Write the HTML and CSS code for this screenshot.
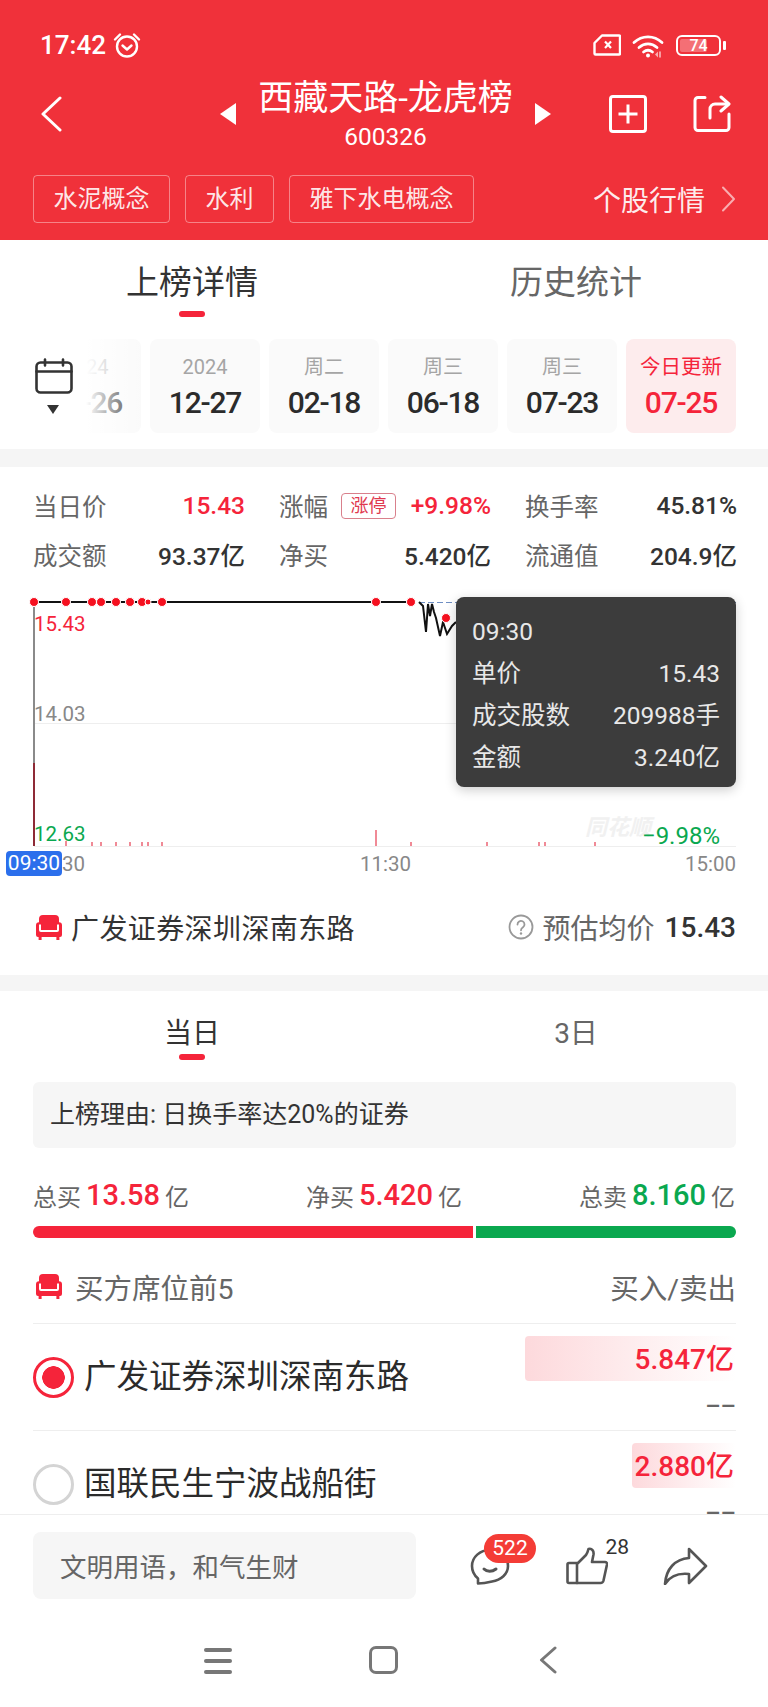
FILE: index.html
```html
<!DOCTYPE html>
<html lang="zh-CN">
<head>
    <meta charset="UTF-8">
    <meta name="viewport" content="width=device-width, initial-scale=1.0">
    <title>西藏天路-龙虎榜</title>
    <link rel="stylesheet" href="styles.css">
</head>
<body>
    <svg class="defs" width="0" height="0">
        <symbol id="sofa" viewBox="0 0 26 25">
            <path fill="#f5243a" d="M7 0h12a4 4 0 0 1 4 4v3.200a3 3 0 0 1 3 3V20a2 2 0 0 1-2 2h-.6v3h-3v-3H5.600v3h-3v-3H2a2 2 0 0 1-2-2v-9.800a3 3 0 0 1 3-3V4a4 4 0 0 1 4-4z"/>
            <path fill="none" stroke="#fff" stroke-width="2" d="M4 9.500v5.500a1 1 0 0 0 1 1h16a1 1 0 0 0 1-1V9.500"/>
        </symbol>
    </svg>

    <div class="page">
        <div class="content">
            <!-- Red header -->
            <header class="header">
                <div class="status-bar">
                    <div class="status-left">
                        <span class="clock">17:42</span>
                        <svg class="alarm" viewBox="0 0 28 26" fill="none" stroke="#fff" stroke-width="2.400" stroke-linecap="round" stroke-linejoin="round">
                            <circle cx="14" cy="14.500" r="10"/>
                            <path d="M9.500 13.500l4.500 4 4.500-4"/>
                            <path d="M2 7.500L7 2.500M26 7.500L21 2.500"/>
                        </svg>
                    </div>
                    <div class="status-right">
                        <svg class="sim" viewBox="0 0 28 22" fill="none" stroke="#fff" stroke-width="2.400" stroke-linejoin="round">
                            <path d="M9 1.500h17a1 1 0 0 1 1 1v17a1 1 0 0 1-1 1H2.500a1 1 0 0 1-1-1V9z"/>
                            <path stroke-width="2.200" d="M12 7.500l6 6.500M18 7.500l-6 6.500"/>
                        </svg>
                        <svg class="wifi" viewBox="0 0 32 25" fill="none" stroke="#fff" stroke-width="2.800" stroke-linecap="round">
                            <path d="M2 9.500c8-7.500 20-7.500 28 0"/>
                            <path d="M7 14.500c5.500-4.800 12.500-4.800 18 0"/>
                            <path d="M11.500 19c3-2.400 6-2.400 9 0"/>
                            <circle cx="16" cy="22.500" r="2" fill="#fff" stroke="none"/>
                            <path d="M23 21.500l3-3v6z" fill="#fff" fill-opacity=".6" stroke="none"/>
                            <path d="M28 19v5" stroke-width="1.500" stroke-opacity=".7"/>
                        </svg>
                        <div class="battery">
                            <div class="battery-body">
                                <span class="battery-fill"></span>
                                <span class="battery-text">74</span>
                            </div>
                            <span class="battery-cap"></span>
                        </div>
                    </div>
                </div>

                <div class="title-bar">
                    <svg class="back" viewBox="0 0 22 36" fill="none" stroke="#fff" stroke-width="3" stroke-linecap="round" stroke-linejoin="round">
                        <path d="M20 2L3 18l17 16"/>
                    </svg>
                    <div class="title-center">
                        <span class="tri tri-left"></span>
                        <div class="title-text">
                            <div class="title">西藏天路-龙虎榜</div>
                            <div class="code">600326</div>
                        </div>
                        <span class="tri tri-right"></span>
                    </div>
                    <div class="title-actions">
                        <svg class="action" viewBox="0 0 38 38" fill="none" stroke="#fff" stroke-width="3" stroke-linejoin="round">
                            <rect x="1.500" y="1.500" width="35" height="35" rx="2.500"/>
                            <path d="M19 9.500v19M9.500 19h19"/>
                        </svg>
                        <svg class="action" viewBox="0 0 38 38" fill="none" stroke="#fff" stroke-width="3" stroke-linecap="round" stroke-linejoin="round">
                            <path d="M12 2.500H5a3 3 0 0 0-3 3v27a3 3 0 0 0 3 3h28a3 3 0 0 0 3-3V19"/>
                            <path d="M17 23v-9a5 5 0 0 1 5-5h13"/>
                            <path d="M28 2l8 7-8 7"/>
                        </svg>
                    </div>
                </div>

                <div class="tag-bar">
                    <div class="tags">
                        <span class="tag">水泥概念</span>
                        <span class="tag">水利</span>
                        <span class="tag">雅下水电概念</span>
                    </div>
                    <div class="quote-link">
                        <span>个股行情</span>
                        <svg class="quote-arrow" viewBox="0 0 15 26" fill="none" stroke="#fff" stroke-opacity=".6" stroke-width="2" stroke-linecap="round" stroke-linejoin="round">
                            <path d="M2 1.500l11 11.500L2 24.500"/>
                        </svg>
                    </div>
                </div>
            </header>

            <!-- Main tabs -->
            <div class="tabs">
                <div class="tab active"><span>上榜详情</span><i class="tab-line"></i></div>
                <div class="tab"><span>历史统计</span></div>
            </div>

            <!-- Date picker row -->
            <div class="date-row">
                <div class="calendar">
                    <svg class="calendar-icon" viewBox="0 0 38 36" fill="none" stroke="#333" stroke-width="2.600" stroke-linecap="round" stroke-linejoin="round">
                        <rect x="1.500" y="4.500" width="35" height="30" rx="4"/>
                        <path d="M1.500 13.500h35M10 1.500v6M28 1.500v6"/>
                    </svg>
                    <span class="calendar-arrow"></span>
                </div>
                <div class="date-strip">
                    <div class="date-card"><span class="date-top">2024</span><span class="date-main">12-26</span></div>
                    <div class="date-card"><span class="date-top">2024</span><span class="date-main">12-27</span></div>
                    <div class="date-card"><span class="date-top">周二</span><span class="date-main">02-18</span></div>
                    <div class="date-card"><span class="date-top">周三</span><span class="date-main">06-18</span></div>
                    <div class="date-card"><span class="date-top">周三</span><span class="date-main">07-23</span></div>
                    <div class="date-card today"><span class="date-top">今日更新</span><span class="date-main">07-25</span></div>
                </div>
            </div>

            <div class="band"></div>

            <!-- Stats and chart -->
            <section class="stats-section">
                <div class="stats">
                    <div class="stat"><span class="stat-label">当日价</span><span class="stat-value red">15.43</span></div>
                    <div class="stat">
                        <span class="stat-label">涨幅<em class="limit-badge">涨停</em></span>
                        <span class="stat-value red">+9.98%</span>
                    </div>
                    <div class="stat"><span class="stat-label">换手率</span><span class="stat-value">45.81%</span></div>
                    <div class="stat"><span class="stat-label">成交额</span><span class="stat-value">93.37亿</span></div>
                    <div class="stat"><span class="stat-label">净买</span><span class="stat-value">5.420亿</span></div>
                    <div class="stat"><span class="stat-label">流通值</span><span class="stat-value">204.9亿</span></div>
                </div>

                <div class="chart">
                    <svg class="chart-svg" viewBox="0 581 768 309">
                        <path class="grid-line" d="M34 723.500H736M34 846.500H736"/>
                        <path class="cross-h" d="M419 602.500H736"/>
                        <path class="cross-v" d="M34 607V763"/>
                        <path class="cross-v-bar" d="M34 763V846"/>
                        <path class="vol" d="M66 841V846M92 842V846M101 842V846M116 842V846M130 842V846M142 842V846M148 842V846M162 842V846M376 830V846M411 842V846M487 842V846M539 842V846M545 842V846M595 842V846"/>
                        <path class="price" d="M34 602H411M419 602L423 606L426 632L428 604L430 616L432 604L434 612L436 618L440 636L443 622L447 634L452 626L456 622"/>
                        <g class="dots">
                            <circle cx="34" cy="602" r="4.500"/><circle cx="66" cy="602" r="4.500"/><circle cx="92" cy="602" r="4.500"/>
                            <circle cx="101" cy="602" r="4.500"/><circle cx="116" cy="602" r="4.500"/><circle cx="130" cy="602" r="4.500"/>
                            <circle cx="142" cy="602" r="4.500"/><circle cx="148" cy="602" r="3"/><circle cx="162" cy="602" r="4.500"/>
                            <circle cx="376" cy="602" r="4.500"/><circle cx="411" cy="602" r="4.500"/><circle cx="446" cy="618" r="4.500"/>
                        </g>
                        <text class="axis red-text" x="34" y="631">15.43</text>
                        <text class="axis" x="34" y="721">14.03</text>
                        <text class="axis green-text" x="34" y="841">12.63</text>
                        <text class="axis" x="62" y="871">30</text>
                        <text class="axis" x="360" y="871">11:30</text>
                        <text class="axis" x="736" y="871" text-anchor="end">15:00</text>
                        <text class="watermark" x="585" y="835">同花顺</text>
                        <text class="axis-pct green-text" x="720" y="844" text-anchor="end">−9.98%</text>
                    </svg>
                    <span class="time-badge">09:30</span>
                    <div class="chart-tip">
                        <div class="tip-time">09:30</div>
                        <div class="tip-row"><span>单价</span><span>15.43</span></div>
                        <div class="tip-row"><span>成交股数</span><span>209988手</span></div>
                        <div class="tip-row"><span>金额</span><span>3.240亿</span></div>
                    </div>
                </div>

                <div class="broker-row">
                    <div class="broker-name">
                        <svg class="sofa"><use href="#sofa"/></svg>
                        <span>广发证券深圳深南东路</span>
                    </div>
                    <div class="broker-price">
                        <svg class="help" viewBox="0 0 26 26" fill="none" stroke="#999" stroke-width="1.800" stroke-linecap="round">
                            <circle cx="13" cy="13" r="11.500"/>
                            <path d="M9.500 10.500a3.500 3.500 0 1 1 5.500 2.800c-1.300.9-2 1.500-2 3"/>
                            <circle cx="13" cy="19.500" r="1.200" fill="#999" stroke="none"/>
                        </svg>
                        <span class="broker-label">预估均价</span>
                        <span class="broker-value">15.43</span>
                    </div>
                </div>
            </section>

            <div class="band"></div>

            <!-- Seat details -->
            <section class="seats">
                <div class="tabs sub-tabs">
                    <div class="tab active"><span>当日</span><i class="tab-line"></i></div>
                    <div class="tab"><span>3日</span></div>
                </div>

                <div class="reason">上榜理由: 日换手率达20%的证券</div>

                <div class="summary">
                    <div class="sum-item">总买<b class="red">13.58</b>亿</div>
                    <div class="sum-item">净买<b class="red">5.420</b>亿</div>
                    <div class="sum-item">总卖<b class="green">8.160</b>亿</div>
                </div>
                <div class="ratio-bar">
                    <span class="ratio-buy"></span>
                    <span class="ratio-sell"></span>
                </div>

                <div class="seat-head">
                    <div class="seat-title">
                        <svg class="sofa"><use href="#sofa"/></svg>
                        <span>买方席位前5</span>
                    </div>
                    <span class="seat-side">买入/卖出</span>
                </div>

                <div class="seat-row">
                    <span class="radio checked"></span>
                    <span class="seat-name">广发证券深圳深南东路</span>
                    <div class="seat-amounts">
                        <div class="amount-bar" style="width: 211px">5.847亿</div>
                        <div class="amount-sell">––</div>
                    </div>
                </div>
                <div class="seat-row">
                    <span class="radio"></span>
                    <span class="seat-name">国联民生宁波战船街</span>
                    <div class="seat-amounts">
                        <div class="amount-bar" style="width: 104px">2.880亿</div>
                        <div class="amount-sell">––</div>
                    </div>
                </div>
            </section>
        </div>

        <!-- Comment bar -->
        <footer class="comment-bar">
            <div class="comment-input">文明用语，和气生财</div>
            <div class="comment-actions">
                <div class="comment-icon chat">
                    <svg class="chat-icon" viewBox="0 0 40 38" fill="none" stroke="#555" stroke-width="2.600" stroke-linecap="round" stroke-linejoin="round">
                        <path d="M20 3C10 3 2 10 2 19c0 6 3 10 6 12.500V36.500c6 0 10-1 14-2 9-1.500 16-7.500 16-15.500C38 10 30 3 20 3z"/>
                        <path d="M14 22c3 3 8 3 12 0" stroke-width="3"/>
                    </svg>
                    <span class="chat-count">522</span>
                </div>
                <div class="comment-icon thumb">
                    <svg class="thumb-icon" viewBox="0 0 42 38" fill="none" stroke="#555" stroke-width="2.600" stroke-linecap="round" stroke-linejoin="round">
                        <path d="M11 16H3a1.500 1.500 0 0 0-1.500 1.500v17A1.500 1.500 0 0 0 3 36h8"/>
                        <path d="M11 17L20 8c1-1.500 2-4 2.500-6 3.500-1 5.500 2 5 5.500L26 15h13c1.500 0 2.200 1 2 2.500l-3.500 16c-.4 1.600-1.500 2.500-3 2.500H11z"/>
                    </svg>
                    <span class="thumb-count">28</span>
                </div>
                <svg class="share-icon" viewBox="0 0 45 38" fill="none" stroke="#555" stroke-width="2.600" stroke-linejoin="round">
                    <path d="M26 2L43 19 26 36V27C16 26 7 29 2 37 3 22 12 12 26 11z"/>
                </svg>
            </div>
        </footer>

        <!-- Android navigation -->
        <nav class="nav-bar">
            <div class="nav-menu"><i></i><i></i><i></i></div>
            <div class="nav-home"></div>
            <svg class="nav-back" viewBox="0 0 18 28" fill="none" stroke="#777" stroke-width="3" stroke-linecap="round" stroke-linejoin="round">
                <path d="M16 2L2.500 14 16 26"/>
            </svg>
        </nav>
    </div>
</body>
</html>
```

FILE: styles.css
```css
* {
    margin: 0;
    padding: 0;
    box-sizing: border-box;
}

html, body {
    width: 768px;
    height: 1707px;
    overflow: hidden;
    background-color: #fff;
    font-family: Roboto, "Noto Sans CJK SC", sans-serif;
    color: #333;
}

.defs {
    display: block;
    height: 0;
}

.red { color: #f5243a; }
.green { color: #0aa84f; }

.page {
    display: flex;
    flex-direction: column;
    height: 1707px;
}

.content {
    height: 1514px;
    flex: none;
    overflow: hidden;
}

/* Header */
.header {
    height: 240px;
    background-color: #f0313a;
    color: #fff;
}

.status-bar {
    height: 70px;
    padding: 20px 42px 0 40px;
    display: flex;
    justify-content: space-between;
    align-items: center;
}

.status-left,
.status-right {
    display: flex;
    align-items: center;
}

.clock {
    font-size: 26px;
    font-weight: 500;
}

.alarm {
    width: 28px;
    height: 26px;
    margin-left: 7px;
}

.sim {
    width: 28px;
    height: 22px;
}

.wifi {
    width: 32px;
    height: 25px;
    margin-left: 11px;
}

.battery {
    display: flex;
    align-items: center;
    margin-left: 12px;
}

.battery-body {
    position: relative;
    width: 45px;
    height: 21px;
    border: 2px solid #fff;
    border-radius: 6px;
    display: flex;
    justify-content: center;
    align-items: center;
}

.battery-fill {
    position: absolute;
    left: 2px;
    top: 2px;
    bottom: 2px;
    width: 27px;
    border-radius: 2px;
    background-color: rgba(255, 255, 255, 0.3);
}

.battery-text {
    position: relative;
    font-size: 16px;
    font-weight: 500;
}

.battery-cap {
    width: 3px;
    height: 9px;
    margin-left: 2px;
    border-radius: 1px;
    background-color: #fff;
}

.title-bar {
    height: 95px;
    padding: 0 37px 0 40px;
    display: grid;
    grid-template-columns: 1fr auto 1fr;
    align-items: center;
}

.back {
    width: 22px;
    height: 36px;
    margin-top: -8px;
}

.title-center {
    display: flex;
    align-items: center;
    gap: 22px;
}

.title-text {
    margin-top: -8px;
    text-align: center;
}

.title {
    font-size: 35px;
    line-height: 46px;
    white-space: nowrap;
}

.code {
    font-size: 24.500px;
    line-height: 30px;
}

.tri {
    width: 0;
    height: 0;
    margin-top: -8px;
    border-top: 11px solid transparent;
    border-bottom: 11px solid transparent;
}

.tri-left { border-right: 16px solid #fff; }
.tri-right { border-left: 16px solid #fff; }

.title-actions {
    display: flex;
    justify-content: flex-end;
    gap: 46px;
    margin-top: -8px;
}

.action {
    width: 38px;
    height: 38px;
}

.tag-bar {
    padding: 10px 32px 0 33px;
    display: flex;
    justify-content: space-between;
    align-items: center;
}

.tags {
    display: flex;
    gap: 15px;
}

.tag {
    height: 48px;
    padding: 0 19.500px;
    font-size: 24px;
    line-height: 46px;
    border: 1px solid rgba(255, 255, 255, 0.4);
    border-radius: 4px;
    color: rgba(255, 255, 255, 0.9);
}

.quote-link {
    display: flex;
    align-items: center;
    gap: 16px;
    font-size: 28px;
    color: rgba(255, 255, 255, 0.92);
}

.quote-arrow {
    width: 15px;
    height: 26px;
}

/* Tabs */
.tabs {
    display: flex;
    height: 90px;
}

.tab {
    width: 384px;
    padding-top: 21px;
    display: flex;
    flex-direction: column;
    align-items: center;
    font-size: 33px;
    line-height: 44px;
    color: #666;
}

.tab.active {
    color: #333;
}

.tab-line {
    width: 26px;
    height: 6px;
    margin-top: 6px;
    border-radius: 3px;
    background-color: #f5243a;
}

/* Dates */
.date-row {
    height: 94px;
    margin-top: 9px;
    padding: 0 32px 0 35px;
    display: flex;
    align-items: center;
}

.calendar {
    width: 45px;
    flex: none;
    display: flex;
    flex-direction: column;
    align-items: flex-start;
}

.calendar-icon {
    width: 38px;
    height: 36px;
}

.calendar-arrow {
    width: 0;
    height: 0;
    margin: 11px 0 0 12px;
    border-left: 6.500px solid transparent;
    border-right: 6.500px solid transparent;
    border-top: 9px solid #333;
}

.date-strip {
    position: relative;
    flex: 1;
    height: 94px;
    display: flex;
    justify-content: flex-end;
    gap: 9px;
    overflow: hidden;
}

/* fades the card that is scrolled off on the left */
.date-strip::before {
    content: "";
    position: absolute;
    left: 0;
    top: 0;
    bottom: 0;
    width: 60px;
    background: linear-gradient(to right, #fff 10%, rgba(255, 255, 255, 0.1));
}

.date-card {
    width: 110px;
    flex: none;
    border-radius: 8px;
    background-color: #fafafa;
    display: flex;
    flex-direction: column;
    align-items: center;
}

.date-top {
    margin-top: 14px;
    font-size: 20px;
    line-height: 28px;
    color: #a5a5a5;
}

.date-main {
    margin-top: 3px;
    font-size: 30px;
    font-weight: 500;
    letter-spacing: -1.200px;
    line-height: 38px;
    color: #2b2b2b;
}

.date-card.today {
    background-color: #fdeced;
}

.today .date-top,
.today .date-main {
    color: #f5243a;
}

.today .date-top {
    font-size: 20.500px;
}

.band {
    height: 16px;
    background-color: #f5f5f5;
}

.date-row + .band {
    margin-top: 16px;
    height: 18px;
}

/* Stats */
.stats-section {
    height: 508px;
}

.stats {
    padding: 14px 30px 2px 33px;
    display: grid;
    grid-template-columns: repeat(3, 212px);
    column-gap: 34px;
}

.stat {
    height: 49px;
    display: flex;
    justify-content: space-between;
    align-items: center;
}

.stat-label {
    display: flex;
    align-items: center;
    font-size: 24.500px;
    color: #666;
}

.stat-value {
    font-size: 24.500px;
    font-weight: 500;
}

.limit-badge {
    margin-left: 13px;
    width: 55px;
    height: 26px;
    border: 1px solid #d9808c;
    border-radius: 4px;
    font-size: 18px;
    font-style: normal;
    line-height: 24px;
    text-align: center;
    color: #e0394f;
}

/* Chart */
.chart {
    position: relative;
    height: 309px;
}

.chart-svg {
    display: block;
    width: 768px;
    height: 309px;
}

.grid-line {
    stroke: #eee;
    stroke-width: 1;
    fill: none;
}

.cross-h {
    stroke: #6f8fc4;
    stroke-width: 1;
    stroke-dasharray: 6 3;
    fill: none;
}

.cross-v {
    stroke: #8a8a8a;
    stroke-width: 2;
}

.cross-v-bar {
    stroke: #8e2a36;
    stroke-width: 2;
}

.vol {
    stroke: #f08a96;
    stroke-width: 2;
}

.price {
    fill: none;
    stroke: #111;
    stroke-width: 2;
}

.dots circle {
    fill: #f5101f;
    stroke: #fff;
    stroke-width: 1;
}

.axis {
    font-size: 20.500px;
    fill: #888;
}

.axis-pct {
    font-size: 24px;
}

.red-text { fill: #f5243a; }
.green-text { fill: #0aa84f; }

.watermark {
    font-size: 22px;
    font-style: italic;
    font-weight: 700;
    fill: #f1f1f1;
}

.time-badge {
    position: absolute;
    left: 6px;
    top: 270px;
    width: 56px;
    height: 25px;
    border-radius: 4px;
    background-color: #2b6fec;
    color: #fff;
    font-size: 21px;
    line-height: 25px;
    text-align: center;
}

.chart-tip {
    position: absolute;
    left: 456px;
    top: 16px;
    width: 280px;
    height: 190px;
    padding: 14px 16px 0;
    border-radius: 8px;
    background-color: #3c3c3c;
    box-shadow: 0 3px 12px rgba(0, 0, 0, 0.2);
    color: #e8e8e8;
    font-size: 24.500px;
}

.tip-time {
    line-height: 42px;
}

.tip-row {
    display: flex;
    justify-content: space-between;
    line-height: 42px;
}

/* Broker row */
.broker-row {
    height: 74px;
    padding: 0 32px 0 36px;
    display: flex;
    justify-content: space-between;
    align-items: center;
}

.broker-name {
    display: flex;
    align-items: center;
    font-size: 28px;
    letter-spacing: 0.4px;
}

.sofa {
    width: 26px;
    height: 25px;
    flex: none;
}

.broker-name .sofa {
    margin-right: 9px;
}

.broker-price {
    display: flex;
    align-items: center;
    font-size: 28px;
}

.help {
    width: 26px;
    height: 26px;
    margin-right: 9px;
}

.broker-label {
    color: #666;
}

.broker-value {
    margin-left: 10px;
    font-weight: 500;
}

/* Seats */
.seats {
    padding: 0 32px 0 33px;
}

.sub-tabs {
    height: 69px;
    margin: 0 -32px 0 -33px;
}

.sub-tabs .tab {
    padding-top: 24px;
    font-size: 28px;
    line-height: 38px;
}

.sub-tabs .tab-line {
    margin-top: 1px;
}

.reason {
    height: 66px;
    margin-top: 22px;
    padding-left: 17px;
    border-radius: 6px;
    background-color: #f6f6f6;
    font-size: 25px;
    line-height: 66px;
}

.summary {
    height: 40px;
    margin-top: 27px;
    margin-bottom: 1px;
    display: flex;
    justify-content: space-between;
    padding-right: 1px;
}

.sum-item {
    display: flex;
    align-items: center;
    font-size: 24px;
    color: #666;
}

.sum-item b {
    margin: 0 5px;
    font-size: 29px;
    font-weight: 500;
}

.ratio-bar {
    margin-top: 11px;
    height: 12px;
    display: flex;
    gap: 3px;
}

.ratio-buy {
    width: 440px;
    border-radius: 6px 0 0 6px;
    background-color: #f5243a;
}

.ratio-sell {
    flex: 1;
    border-radius: 0 6px 6px 0;
    background-color: #0aa84f;
}

.seat-head {
    height: 70px;
    margin-top: 16px;
    padding-left: 3px;
    padding-bottom: 4px;
    display: flex;
    justify-content: space-between;
    align-items: center;
    border-bottom: 1px solid #eee;
    color: #666;
}

.seat-title {
    display: flex;
    align-items: center;
    gap: 13px;
    font-size: 28.500px;
}

.seat-side {
    font-size: 28.500px;
}

.seat-row {
    height: 107px;
    display: flex;
    align-items: center;
    border-bottom: 1px solid #eee;
}

.radio {
    width: 41px;
    height: 41px;
    flex: none;
    border: 3px solid #d4d4d4;
    border-radius: 50%;
}

.radio.checked {
    border-color: #f5243a;
    background: radial-gradient(circle, #f5243a 0 11px, #fff 11.500px);
}

.seat-name {
    margin-left: 10px;
    margin-bottom: 8px;
    font-size: 32.500px;
    color: #2b2b2b;
}

.seat-amounts {
    margin-left: auto;
    align-self: flex-start;
    padding-top: 12px;
    display: flex;
    flex-direction: column;
    align-items: flex-end;
}

.amount-bar {
    height: 45px;
    padding-right: 2px;
    border-radius: 4px;
    background: linear-gradient(to right, #fdd9dc, #fff);
    color: #f5243a;
    font-size: 28px;
    font-weight: 500;
    line-height: 47px;
    text-align: right;
}

.amount-sell {
    margin-top: 22px;
    font-size: 24px;
    font-weight: 500;
    line-height: 6px;
    color: #666;
}

/* Comment bar */
.comment-bar {
    height: 102px;
    padding: 17px 60px 0 33px;
    border-top: 1px solid #eee;
    display: flex;
    align-items: flex-start;
}

.comment-input {
    width: 383px;
    height: 67px;
    padding-left: 27px;
    border-radius: 8px;
    background-color: #f6f6f6;
    font-size: 26.500px;
    line-height: 71px;
    color: #666;
}

.comment-actions {
    margin-left: 54px;
    flex: 1;
    height: 67px;
    display: flex;
    justify-content: space-between;
    align-items: flex-start;
}

.comment-icon {
    position: relative;
}

.chat-icon {
    display: block;
    width: 40px;
    height: 38px;
    margin-top: 15px;
}

.chat-count {
    position: absolute;
    left: 14px;
    top: 2px;
    width: 52px;
    height: 29px;
    border-radius: 15px;
    background-color: #f43c36;
    color: #fff;
    font-size: 21px;
    line-height: 29px;
    text-align: center;
}

.chat {
    margin-right: 15px;
}

.thumb {
    margin-right: 15px;
}

.thumb-icon {
    display: block;
    width: 42px;
    height: 38px;
    margin-top: 15px;
}

.thumb-count {
    position: absolute;
    left: 40px;
    top: 3px;
    font-size: 21px;
    color: #333;
}

.share-icon {
    width: 45px;
    height: 38px;
    margin-top: 15px;
}

/* Android nav */
.nav-bar {
    flex: 1;
    padding: 30px 0 0 204px;
    display: flex;
    align-items: flex-start;
}

.nav-menu {
    width: 28px;
    height: 26px;
    margin-top: 2px;
    display: flex;
    flex-direction: column;
    justify-content: space-between;
}

.nav-menu i {
    height: 4px;
    border-radius: 2px;
    background-color: #777;
}

.nav-home {
    width: 29px;
    height: 28px;
    margin-left: 137px;
    border: 3px solid #777;
    border-radius: 7px;
}

.nav-back {
    width: 18px;
    height: 28px;
    margin-left: 141px;
}
```
